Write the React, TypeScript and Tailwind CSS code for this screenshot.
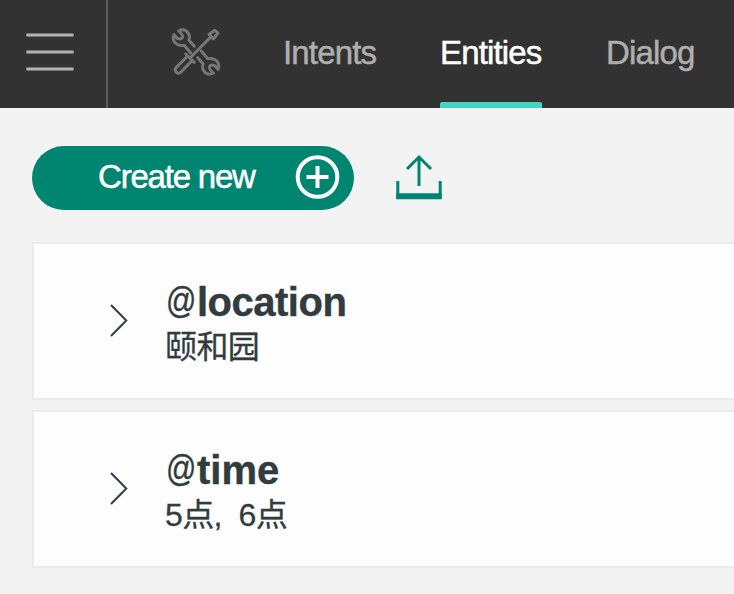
const sans = "font-['Liberation_Sans','Noto_Sans_CJK_SC',sans-serif]";

function ToolsIcon() {
  const wrench =
    "M92 111 L73 88 Q56 91 46 81 Q36 71 42 56 L53 68 Q65 71 68 62 Q69 57 56 45 Q68 38 79 45 Q92 56 87 73 L103 91";
  return (
    <svg className="h-[72px] w-[72px]" viewBox="0 0 216 216" fill="none" stroke="#777777" strokeWidth="9" strokeLinecap="round" strokeLinejoin="round">
      <path d={wrench} />
      <path d={wrench} transform="rotate(180 108 108)" />
      <path d="M147 55 L165 43 L174 51 L160 69 Z M151 64 L93 123 M77 114 L103 139 M83 120 L49 154 Q42 162 49 169 Q56 175 63 168 L96 134" />
    </svg>
  );
}

function Tab({ label, active, width }: { label: string; active?: boolean; width: string }) {
  return (
    <div className={`relative flex h-full items-center pb-[2px] ${width} ${active ? "text-white" : "text-[#aeaeae]"}`}>
      <span className="whitespace-nowrap text-[33px] tracking-[-0.85px] [-webkit-text-stroke:0.5px]">{label}</span>
      {active && <div className="absolute bottom-0 left-0 h-[6px] w-full rounded-t-[2px] bg-[#41d6c3]" />}
    </div>
  );
}

function MenuBar() {
  return <div className="h-1 w-12 rounded-[2px] border-y border-[#757575] bg-[#b2b2b2]" />;
}

function Entity({ name, values, tracking }: { name: string; values: string; tracking: string }) {
  return (
    <div className="flex h-[158px] border-2 border-r-0 border-[#ebebeb] bg-[#fdfdfd] text-[#323c3e]">
      <svg className="ml-[72px] mt-[58px] h-[38px] w-[26px] shrink-0" viewBox="0 0 26 38" fill="none" stroke="currentColor" strokeWidth="2">
        <path d="M5 3 L20.3 18.5 L5 34" />
      </svg>
      <div className="ml-[34px] pt-[35px]">
        <div className={`flex h-[46px] items-center text-[40px] font-bold leading-[46px] [-webkit-text-stroke:0.4px] ${tracking}`}>
          <span className="inline-block h-[46px] w-[31px] origin-left scale-x-[.83] text-[36px] font-normal leading-[43px] tracking-normal">@</span>
          <span>{name}</span>
        </div>
        <div className="-ml-px whitespace-pre text-[32px] leading-[44px] tracking-[-0.6px] [-webkit-text-stroke:0.3px]">{values}</div>
      </div>
    </div>
  );
}

export default function App() {
  return (
    <div className={`h-[594px] w-[734px] overflow-hidden bg-[#f3f3f3] ${sans}`}>
      <header className="flex h-[108px] bg-[#323232]">
        <div className="flex w-[108px] flex-col gap-[13px] border-r-2 border-[#5d5d5d] pl-[26px] pt-[33px]">
          <MenuBar />
          <MenuBar />
          <MenuBar />
        </div>
        <div className="ml-[52px] mr-[51px] pt-4">
          <ToolsIcon />
        </div>
        <nav className="flex">
          <Tab label="Intents" width="w-[157px]" />
          <Tab label="Entities" active width="w-[102px]" />
          <div className="w-[64px]" />
          <Tab label="Dialog" width="w-[92px]" />
        </nav>
      </header>
      <main className="pl-8 pt-[38px]">
        <div className="flex h-16">
          <button className="flex h-16 w-[322px] items-center rounded-full bg-[#008571] pl-[66px] text-white">
            <span className="w-[197px] whitespace-nowrap pb-[2px] text-left text-[33px] tracking-[-1.2px] [-webkit-text-stroke:0.5px]">Create new</span>
            <svg className="mb-[3px] h-[46px] w-[46px]" viewBox="0 0 46 46" fill="none" stroke="currentColor">
              <circle cx="22.5" cy="23" r="19.8" strokeWidth="4" />
              <path d="M22.5 12 V34 M11.5 23 H33.5" strokeWidth="4" />
            </svg>
          </button>
          <svg className="ml-[40px] mt-[6px] h-[52px] w-[50px]" viewBox="0 0 50 52" fill="none" stroke="#008571">
            <path d="M25 5 V34" strokeWidth="3" />
            <path d="M13 17 L25 5 L37 17" strokeWidth="3" />
            <path d="M3.8 29 V47 M46.2 29 V47" strokeWidth="3" />
            <path d="M2.3 44.3 H47.7" strokeWidth="6" />
          </svg>
        </div>
        <div className="mt-8 flex flex-col gap-[10px]">
          <Entity name="location" values="颐和园" tracking="tracking-[-0.5px]" />
          <Entity name="time" values="5点,  6点" tracking="tracking-[0px]" />
        </div>
      </main>
    </div>
  );
}
